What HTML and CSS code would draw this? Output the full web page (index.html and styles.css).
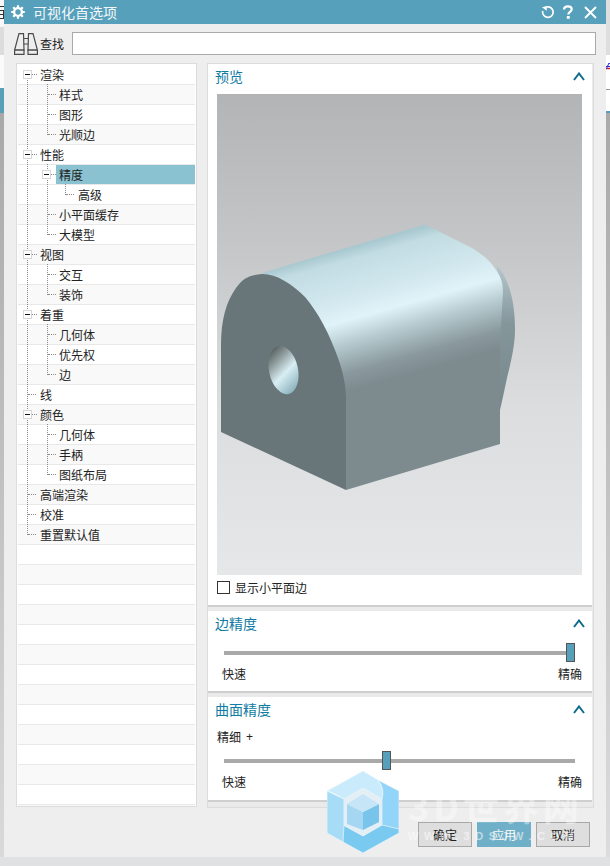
FILE: index.html
```html
<!DOCTYPE html>
<html lang="zh">
<head>
<meta charset="utf-8">
<title>可视化首选项</title>
<link rel="stylesheet" href="styles.css">
</head>
<body>
<div class="desk">
  <div class="strip strip-l">
    <span class="s-a"><svg width="4" height="26" viewBox="0 0 4 26"><path d="M0 6.500h4M0 10.500h4M0 14.500h4M0 18.500h4M3.500 10v9" fill="none" stroke="#333" stroke-width="1"/></svg></span>
    <span class="s-b"></span><span class="s-c"></span><span class="s-d"></span>
  </div>
  <div class="dialog">
    <header class="title">
      <svg class="gear" width="14" height="14" viewBox="0 0 14 14"><circle cx="7" cy="7" r="3.900" fill="none" stroke="#fff" stroke-width="2.400"/><path d="M7 .2v2.500M7 11.300v2.500M.2 7h2.500M11.300 7h2.500M2.200 2.200L4 4M10 10l1.800 1.800M11.800 2.200L10 4M4 10l-1.800 1.800" stroke="#fff" stroke-width="2.200"/></svg>
      <span class="title-text">可视化首选项</span>
      <span class="title-tools">
        <svg width="14" height="14" viewBox="0 0 14 14"><path d="M5.500 2A5.300 5.300 0 1 1 1.700 6" fill="none" stroke="#fff" stroke-width="1.700"/><path d="M1 2.300L5.800 1V5.800z" fill="#fff"/></svg>
        <svg width="12" height="14" viewBox="0 0 12 14"><path d="M2 4.400C2 2.400 3.600 1.300 5.800 1.300s3.900 1.100 3.900 3c0 2.600-3.400 2.600-3.400 5.200" fill="none" stroke="#fff" stroke-width="2.200"/><rect x="4.800" y="11" width="2.900" height="2.800" fill="#fff"/></svg>
        <svg class="tool-close" width="13" height="13" viewBox="0 0 13 13"><path d="M1 1l11 11M12 1L1 12" stroke="#fff" stroke-width="1.900"/></svg>
      </span>
    </header>
    <div class="search">
      <svg class="binoc" width="24" height="22" viewBox="0 0 24 22"><g fill="none" stroke="#4a4a4a" stroke-width="1.200"><path d="M5 .6H9.500L10 17H.6z"/><path d="M14.500 .6H19L23.400 17H14z"/><path d="M.6 17h9.400v4.400H.6zM14 17h9.400v4.400H14zM9.700 5.500h4.800M9.800 11h4.500"/></g></svg>
      <span class="search-label">查找</span>
      <div class="search-input"></div>
    </div>
    <div class="main">
      <nav class="tree">
        <div class="row"><i class="guide g1 top"></i><b class="box b1"></b><span class="t t1">渲染</span></div>
        <div class="row alt"><i class="guide g1"></i><i class="guide g2 tick"></i><span class="t t2">样式</span></div>
        <div class="row"><i class="guide g1"></i><i class="guide g2 tick"></i><span class="t t2">图形</span></div>
        <div class="row alt"><i class="guide g1"></i><i class="guide g2 tick last"></i><span class="t t2">光顺边</span></div>
        <div class="row"><i class="guide g1"></i><b class="box b1"></b><span class="t t1">性能</span></div>
        <div class="row"><i class="guide g1"></i><i class="guide g2"></i><b class="box b2"></b><span class="t t2 sel">精度</span></div>
        <div class="row"><i class="guide g1"></i><i class="guide g2"></i><i class="guide g3 tick last"></i><span class="t t3">高级</span></div>
        <div class="row alt"><i class="guide g1"></i><i class="guide g2 tick"></i><span class="t t2">小平面缓存</span></div>
        <div class="row"><i class="guide g1"></i><i class="guide g2 tick last"></i><span class="t t2">大模型</span></div>
        <div class="row alt"><i class="guide g1"></i><b class="box b1"></b><span class="t t1">视图</span></div>
        <div class="row"><i class="guide g1"></i><i class="guide g2 tick"></i><span class="t t2">交互</span></div>
        <div class="row alt"><i class="guide g1"></i><i class="guide g2 tick last"></i><span class="t t2">装饰</span></div>
        <div class="row"><i class="guide g1"></i><b class="box b1"></b><span class="t t1">着重</span></div>
        <div class="row alt"><i class="guide g1"></i><i class="guide g2 tick"></i><span class="t t2">几何体</span></div>
        <div class="row"><i class="guide g1"></i><i class="guide g2 tick"></i><span class="t t2">优先权</span></div>
        <div class="row alt"><i class="guide g1"></i><i class="guide g2 tick last"></i><span class="t t2">边</span></div>
        <div class="row"><i class="guide g1 tick"></i><span class="t t1">线</span></div>
        <div class="row alt"><i class="guide g1"></i><b class="box b1"></b><span class="t t1">颜色</span></div>
        <div class="row"><i class="guide g1"></i><i class="guide g2 tick"></i><span class="t t2">几何体</span></div>
        <div class="row alt"><i class="guide g1"></i><i class="guide g2 tick"></i><span class="t t2">手柄</span></div>
        <div class="row"><i class="guide g1"></i><i class="guide g2 tick last"></i><span class="t t2">图纸布局</span></div>
        <div class="row alt"><i class="guide g1 tick"></i><span class="t t1">高端渲染</span></div>
        <div class="row"><i class="guide g1 tick"></i><span class="t t1">校准</span></div>
        <div class="row alt"><i class="guide g1 tick last"></i><span class="t t1">重置默认值</span></div>
        <div class="row"></div><div class="row alt"></div><div class="row"></div><div class="row alt"></div>
        <div class="row"></div><div class="row alt"></div><div class="row"></div><div class="row alt"></div>
        <div class="row"></div><div class="row alt"></div><div class="row"></div><div class="row alt"></div>
        <div class="row"></div><div class="row alt"></div>
      </nav>
      <div class="side">
        <section class="sec sec-preview">
          <div class="sec-head"><span>预览</span><svg class="chev" width="12" height="9" viewBox="0 0 12 9"><path d="M1 8l5-6.500 5 6.500" fill="none" stroke="#0f6b8c" stroke-width="2"/></svg></div>
          <div class="view">
            <svg width="365" height="481" viewBox="217 94 365 481">
              <defs>
                <linearGradient id="top" gradientUnits="userSpaceOnUse" x1="343" y1="250" x2="380.300" y2="382.500">
                  <stop offset="0" stop-color="#a9c8d0"/><stop offset=".08" stop-color="#c2dce3"/><stop offset=".3" stop-color="#cfe6ec"/><stop offset=".5" stop-color="#e0f3f9"/><stop offset=".66" stop-color="#b6cbd0"/><stop offset=".87" stop-color="#8a999d"/><stop offset="1" stop-color="#7d8b8f"/>
                </linearGradient>
                <linearGradient id="hole" x1=".15" y1="0" x2=".55" y2="1">
                  <stop offset="0" stop-color="#47504f"/><stop offset=".3" stop-color="#8b9798"/><stop offset=".62" stop-color="#d8eef4"/><stop offset="1" stop-color="#8fb5bf"/>
                </linearGradient>
                <linearGradient id="rim" x1="0" y1="0" x2="0" y2="1">
                  <stop offset="0" stop-color="#b5c8ce"/><stop offset=".4" stop-color="#84969b"/><stop offset="1" stop-color="#78888c"/>
                </linearGradient>
              </defs>
              <path d="M497 265C509 280 515 300 515 330C515 345 511 362 507 378C504 392 502 402 500 410L498 300Z" fill="url(#rim)"/>
              <path d="M262 273L423 225H426L462 243C478 250 490 260 496 270C501 277 503 283 503 292L500 345V444L346 490L320 350L280 285Z" fill="url(#top)"/>
              <path d="M221 432V345C221 320 226 302 236 288C243 278 250 275 262 274C277 274 292 284 305 297C318 312 330 335 338 358C343 372 346 385 346 400V490Z" fill="#687579"/>
              <ellipse cx="283.500" cy="370" rx="14.500" ry="24.500" transform="rotate(-12 283.500 370)" fill="url(#hole)"/>
            </svg>
          </div>
          <label class="check"><span class="check-box"></span><span>显示小平面边</span></label>
        </section>
        <section class="sec sec-edge">
          <div class="sec-head"><span>边精度</span><svg class="chev" width="12" height="9" viewBox="0 0 12 9"><path d="M1 8l5-6.500 5 6.500" fill="none" stroke="#0f6b8c" stroke-width="2"/></svg></div>
          <div class="slider"><div class="track"></div><div class="thumb thumb-max"></div></div>
          <div class="scale"><span>快速</span><span>精确</span></div>
        </section>
        <section class="sec sec-face">
          <div class="sec-head"><span>曲面精度</span><svg class="chev" width="12" height="9" viewBox="0 0 12 9"><path d="M1 8l5-6.500 5 6.500" fill="none" stroke="#0f6b8c" stroke-width="2"/></svg></div>
          <div class="fine"><span>精细</span><span class="plus">+</span></div>
          <div class="slider"><div class="track"></div><div class="thumb thumb-mid"></div></div>
          <div class="scale"><span>快速</span><span>精确</span></div>
        </section>
      </div>
    </div>
    <footer class="actions">
      <button class="btn">确定</button>
      <button class="btn primary">应用</button>
      <button class="btn">取消</button>
    </footer>
  </div>
  <div class="strip strip-r">
    <span class="r-a"></span>
    <span class="r-b"><svg width="4" height="34" viewBox="0 0 4 34"><path d="M0 14.500L3 8l1 1M0 11.500h4" fill="none" stroke="#2a2ad0" stroke-width="1"/><path d="M1 13.500h3" stroke="#d8202a" stroke-width="1.500"/></svg></span>
    <span class="r-c"></span><span class="r-d"></span>
  </div>
</div>
<div class="base"></div>
<div class="mark">
  <svg width="72" height="82" viewBox="0 0 72 82">
    <g stroke="#eef7fb" stroke-width=".7">
      <path d="M0 20L36 0L51 9Q58 20 55 28L36 17L17 28Q8 22 0 20Z" fill="#c9ebfc"/>
      <path d="M51 9L72 20V62L56 71Q62 60 55 54V28Q58 18 51 9Z" fill="#93d5f8"/>
      <path d="M16 54L36 65L55 54L72 58V62L36 82L16 71Q12 62 16 54Z" fill="#7ac9f0"/>
      <path d="M0 20L17 28V54L16 71L0 62Z" fill="#a7dcf6"/>
    </g>
    <path d="M36 17L55 28V54L36 65L17 54V28Z" fill="#e4eff5"/>
    <path d="M20 33L36 41V59L20 53Z" fill="#a5d6f2"/>
    <path d="M36 41L52 33V51L36 59Z" fill="#79c4ea"/>
    <path d="M36 23L52 33L36 41L20 33Z" fill="#c6e6f8"/>
  </svg>
  <span class="mark-name">3D世界网</span>
  <span class="mark-url">WWW.3DSJW.COM</span>
</div>
</body>
</html>
```

FILE: styles.css
```css
* { box-sizing: border-box; }
html, body { margin: 0; padding: 0; }
body {
  position: relative;
  width: 610px;
  height: 866px;
  overflow: hidden;
  background: #e0e1e3;
  font-family: "Noto Sans CJK SC", "Liberation Sans", sans-serif;
  font-size: 12px;
  color: #222;
}
.desk { display: flex; height: 857px; }
.base { height: 9px; background: #e0e1e3; }

.strip { width: 4px; flex: none; display: flex; flex-direction: column; overflow: hidden; }
.strip svg { display: block; }
.s-a { height: 27px; background: #f7f7f7; }
.s-b { height: 28px; background: #dcdcdc; }
.s-c { height: 33px; background: #fafafa; }
.s-d { height: 25px; background: #58a0b8; }
.strip-l::after { content: ""; flex: 1; background: linear-gradient(#a9a9a9, #d8d9db); }
.r-a { height: 55px; background: #dedede; }
.r-b { height: 34px; background: #fff; }
.r-c { height: 22px; background: #fff; border-top: 1px solid #999; }
.r-d { flex: 1; background: linear-gradient(#a9a9a9, #dcdcde); border-top: 2px solid #58a0b8; }

.dialog { width: 602px; flex: none; background: #eeeeee; display: flex; flex-direction: column; }
.title { height: 24px; background: #57a0bb; color: #fff; display: flex; align-items: center; padding: 0 9px 0 7px; flex: none; }
.gear { flex: none; }
.title-text { margin-left: 8px; font-size: 14px; color: #f2f8fa; }
.title-tools { margin-left: auto; display: flex; align-items: center; gap: 7px; }
.tool-close { margin-left: 3px; }

.search { height: 39px; display: flex; align-items: center; padding: 0 10px; flex: none; }
.binoc { flex: none; }
.search-label { margin-left: 2px; width: 32px; flex: none; }
.search-input { flex: 1; height: 23px; background: #fff; border: 1px solid #a9a9a9; }

.main { display: flex; gap: 10px; padding: 0 12px; height: 744px; flex: none; }
.tree { width: 181px; flex: none; background: #fff; border: 1px solid #dcdcdc; padding: 1px 0 0 1px; overflow: hidden; }
.row { position: relative; height: 20px; border-bottom: 1px solid #e8e8e8; margin-right: 1px; background: #fff; }
.row.alt { background: #f9f9f9; }

.guide { position: absolute; top: -1px; bottom: -1px; width: 8px; border-left: 1px dotted #8c8c8c; }
.guide.top { top: 10px; }
.g1 { left: 9px; }
.g2 { left: 29px; }
.g3 { left: 47px; }
.guide.last { bottom: 9px; }
.guide.tick::after { content: ""; position: absolute; left: 0; top: 10px; width: 8px; border-top: 1px dotted #8c8c8c; }
.guide.last::after { top: auto; bottom: 0; }

.box { position: absolute; top: 5px; width: 9px; height: 9px; background: #fff; border: 1px solid #d6d6d6; }
.box::before { content: ""; position: absolute; left: 1px; right: 1px; top: 3px; height: 1px; background: #111; }
.box::after { content: ""; position: absolute; left: 8px; top: 3px; width: 5px; border-top: 1px dotted #8c8c8c; }
.b1 { left: 5px; }
.b2 { left: 24px; }

.t { position: absolute; top: 0; height: 19px; line-height: 19px; font-size: 12px; white-space: nowrap; }
.t1 { left: 22px; }
.t2 { left: 41px; }
.t3 { left: 60px; }
.t.sel { left: 38px; right: 0; padding-left: 3px; background: #8bc2d2; }

.side { flex: 1; min-width: 0; border: 1px solid #dcdcdc; display: flex; flex-direction: column; background: #eaeaea; height: 745px; gap: 4px; }
.sec { background: #fff; border-bottom: 2px solid #cfcfcf; margin-right: 1px; flex: none; padding: 0 7px; }
.sec-preview { height: 543px; }
.sec-edge { height: 82px; }
.sec-face { height: 105px; }
.sec-head { display: flex; justify-content: space-between; align-items: center; height: 26px; padding-bottom: 3px; color: #0f7ca3; font-size: 14px; line-height: 20px; }
.chev { margin-top: 2px; }
.view { height: 481px; width: 365px; margin: 4px 0 0 2px; background: linear-gradient(#b3b4b6, #c4c5c7 30%, #dcdddf 65%, #e6e7e9); }
.view svg { display: block; }
.check { display: flex; align-items: center; margin: 6px 0 0 2px; gap: 5px; height: 13px; font-size: 12px; }
.check-box { width: 13px; height: 13px; border: 1px solid #333; background: #fff; }

.slider { position: relative; height: 20px; margin: 6px 10px 0 9px; }
.track { position: absolute; left: 0; right: 0; top: 8px; height: 4px; background: #a9a9a9; }
.thumb { position: absolute; top: 0; width: 9px; height: 19px; background: #57a0bb; border: 1px solid #555; }
.thumb-max { right: 0; }
.thumb-mid { left: 158px; }
.scale { display: flex; justify-content: space-between; padding: 0 3px 0 7px; margin-top: 3px; line-height: 16px; }
.fine { display: flex; gap: 5px; line-height: 16px; padding-left: 2px; margin-top: 6px; }
.plus { font-family: "Liberation Sans", sans-serif; font-size: 12px; }

.actions { flex: 1; display: flex; justify-content: flex-end; align-items: flex-start; gap: 5px; padding: 15px 16px 0 0; }
.btn { width: 54px; height: 25px; padding: 0; background: #dedede; border: 1px solid #a8a8a8; font: inherit; color: #222; }
.btn.primary { background: #6fb0c8; border-color: #6fb0c8; color: #f4f4f4; }

.mark { position: absolute; left: 327px; top: 771px; width: 283px; height: 95px; pointer-events: none; }
.mark svg { position: absolute; left: 0; top: 0; }
.mark-name { position: absolute; left: 81px; top: 9px; font: bold 36px "Noto Sans CJK SC", "Liberation Sans", sans-serif; line-height: 50px; color: rgba(255,255,255,.4); white-space: nowrap; letter-spacing: 4px; }
.mark-url { position: absolute; left: 81px; top: 56px; font: bold 11px "Liberation Sans", sans-serif; letter-spacing: 5.500px; line-height: 18px; color: rgba(255,255,255,.55); white-space: nowrap; }
```
